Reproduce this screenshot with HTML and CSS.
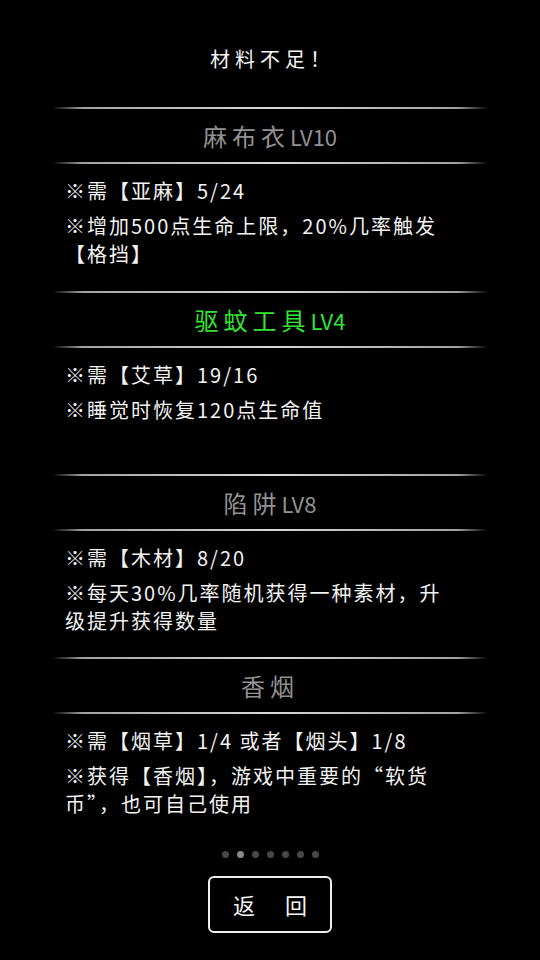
FILE: index.html
```html
<!DOCTYPE html>
<html lang="zh-CN">
<head>
<meta charset="utf-8">
<title>材料不足！</title>
<link rel="stylesheet" href="styles.css">
</head>
<body>
<div class="page">
  <h1 class="notice">材料不足！</h1>

  <section class="item">
    <div class="divider"></div>
    <h2 class="item-title">麻布衣<span class="lv">LV10</span></h2>
    <div class="divider"></div>
    <div class="item-body">
      <p>※需【亚麻】5/24</p>
      <p>※增加500点生命上限，20%几率触发<br>【格挡】</p>
    </div>
  </section>

  <section class="item">
    <div class="divider"></div>
    <h2 class="item-title ready">驱蚊工具<span class="lv">LV4</span></h2>
    <div class="divider"></div>
    <div class="item-body">
      <p>※需【艾草】19/16</p>
      <p>※睡觉时恢复120点生命值</p>
    </div>
  </section>

  <section class="item">
    <div class="divider"></div>
    <h2 class="item-title">陷阱<span class="lv">LV8</span></h2>
    <div class="divider"></div>
    <div class="item-body">
      <p>※需【木材】8/20</p>
      <p>※每天30%几率随机获得一种素材，升<br>级提升获得数量</p>
    </div>
  </section>

  <section class="item">
    <div class="divider"></div>
    <h2 class="item-title">香烟</h2>
    <div class="divider"></div>
    <div class="item-body">
      <p>※需【烟草】1/4 或者【烟头】1/8</p>
      <p>※获得【香烟】，游戏中重要的“软货<br>币”，也可自己使用</p>
    </div>
  </section>

  <div class="pager">
    <span class="dot"></span>
    <span class="dot active"></span>
    <span class="dot"></span>
    <span class="dot"></span>
    <span class="dot"></span>
    <span class="dot"></span>
    <span class="dot"></span>
  </div>

  <button class="back" type="button"><span>返</span><span>回</span></button>
</div>
</body>
</html>
```

FILE: styles.css
```css
html, body {
  margin: 0;
  padding: 0;
  background: #000;
}

body {
  width: 540px;
  height: 960px;
  overflow: hidden;
  font-family: "Noto Sans CJK SC", "Noto Sans", sans-serif;
  color: #f2f2f2;
}

.page {
  display: flex;
  flex-direction: column;
  padding-top: 44px;
}

.notice {
  margin: 0 0 33.3px 0;
  height: 30px;
  line-height: 30px;
  font-size: 20px;
  font-weight: 400;
  letter-spacing: 5px;
  text-align: center;
  padding-left: 5px;
  color: #f4f4f4;
}

.item {
  display: flex;
  flex-direction: column;
}

.divider {
  height: 2px;
  margin: 0 52px;
  background: linear-gradient(90deg,
    rgba(200,200,200,0) 0%,
    rgba(190,190,190,0.85) 7%,
    #d8d8d8 50%,
    rgba(190,190,190,0.85) 93%,
    rgba(200,200,200,0) 100%);
}

.item-title {
  margin: 0;
  height: 53px;
  line-height: 53px;
  text-align: center;
  font-size: 24px;
  font-weight: 400;
  letter-spacing: 5px;
  color: #929292;
}

.item-title.ready {
  color: #33e433;
}

.item-title .lv {
  font-size: 22px;
  letter-spacing: 0;
}

.item-body {
  height: 126.4px;
  box-sizing: border-box;
  padding: 13px 40px 0 65px;
  font-size: 20px;
  letter-spacing: 2px;
  line-height: 28px;
  white-space: nowrap;
}

.item-body p {
  margin: 0;
}

.item-body p + p {
  margin-top: 7px;
}

.pager {
  display: flex;
  justify-content: center;
  gap: 8px;
  margin-top: 10.5px;
  height: 7px;
}

.dot {
  width: 7px;
  height: 7px;
  border-radius: 50%;
  background: #474747;
}

.dot.active {
  background: #8a8a8a;
}

.back {
  margin: 17.5px auto 0;
  width: 124px;
  height: 57px;
  box-sizing: border-box;
  border: 2px solid #efefef;
  border-radius: 6px;
  background: #000;
  color: #f4f4f4;
  font-family: "Noto Sans CJK SC", "Noto Sans", sans-serif;
  font-size: 22px;
  display: flex;
  justify-content: center;
  align-items: center;
  gap: 30px;
  padding: 0;
}
```
